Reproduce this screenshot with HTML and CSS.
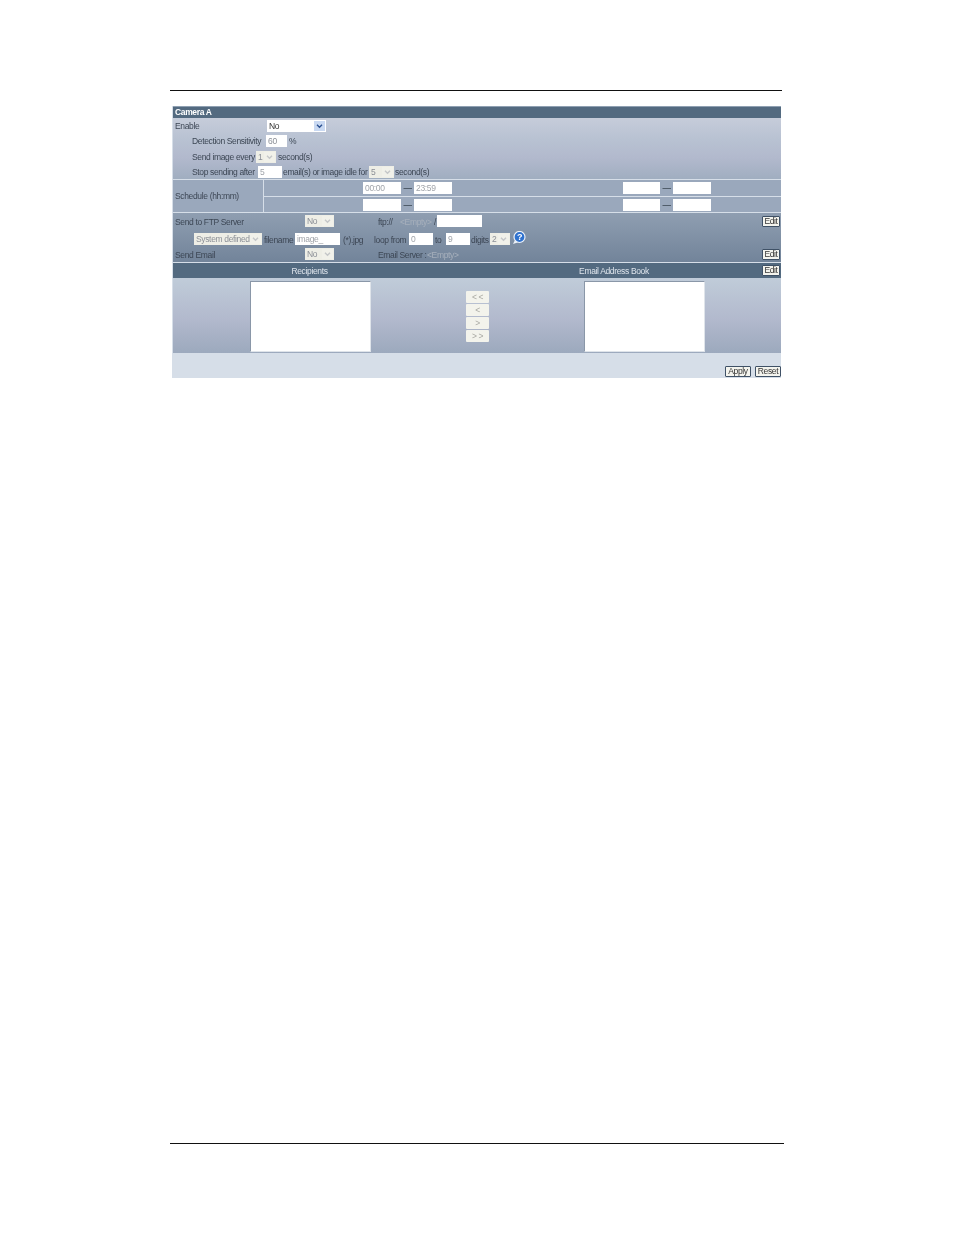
FILE: index.html
```html
<!DOCTYPE html>
<html lang="en">
<head>
  <meta charset="UTF-8">
  <title>Camera A</title>
  <link rel="stylesheet" href="styles.css">
</head>
<body>
  <div class="page">
    <hr class="rule top-rule">
    <form class="panel">
      <div class="title">Camera A</div>

      <div class="motion">
        <div class="row">
          <label class="col-enable">Enable</label>
          <span class="select on w59">No<i class="arrow"><svg viewBox="0 0 8 6"><path d="M1 1l3 3 3-3" /></svg></i></span>
        </div>
        <div class="row sub">
          <label class="col-sens">Detection Sensitivity</label>
          <span class="input w21">60</span><span class="unit">%</span>
        </div>
        <div class="row sub">
          <label class="col-every">Send image every</label>
          <span class="select w20">1<i class="arrow"><svg viewBox="0 0 8 6"><path d="M1 1l3 3 3-3" /></svg></i></span><span class="unit">second(s)</span>
        </div>
        <div class="row sub">
          <label class="col-stop">Stop sending after</label>
          <span class="input w24 dim">5</span><span class="unit idle">email(s) or image idle for</span>
          <span class="select w25">5<i class="arrow"><svg viewBox="0 0 8 6"><path d="M1 1l3 3 3-3" /></svg></i></span><span class="unit tight">second(s)</span>
        </div>
      </div>

      <div class="schedule">
        <div class="schedule-label">Schedule (hh:mm)</div>
        <div class="schedule-times">
          <div class="time-row">
            <span class="input w38 dim">00:00</span><span class="dash">—</span><span class="input w38 dim">23:59</span>
            <span class="input w37 second"></span><span class="dash">—</span><span class="input w38"></span>
          </div>
          <div class="time-row">
            <span class="input w38"></span><span class="dash">—</span><span class="input w38"></span>
            <span class="input w37 second"></span><span class="dash">—</span><span class="input w38"></span>
          </div>
        </div>
      </div>

      <div class="actions">
        <div class="row ftp-row">
          <label class="col-action">Send to FTP Server</label>
          <span class="select w29">No<i class="arrow"><svg viewBox="0 0 8 6"><path d="M1 1l3 3 3-3" /></svg></i></span>
          <span class="server ftp">ftp://</span><span class="empty">&lt;Empty&gt;</span><span class="slash">/</span>
          <span class="input w45"></span>
          <button type="button" class="btn edit">Edit</button>
        </div>
        <div class="row file-row">
          <span class="select w68">System defined<i class="arrow"><svg viewBox="0 0 8 6"><path d="M1 1l3 3 3-3" /></svg></i></span>
          <span class="gap2 t29">filename</span><span class="input w45 gap2 dim">image_</span>
          <span class="gap3 t23">(*).jpg</span><span class="gap8 t34">loop from</span>
          <span class="input w24 gap1 dim">0</span><span class="gap2 t9">to</span><span class="input w24 gap2 dim">9</span>
          <span class="gap1 t18">digits</span><span class="select w20 gap1">2<i class="arrow"><svg viewBox="0 0 8 6"><path d="M1 1l3 3 3-3" /></svg></i></span>
          <svg class="help" viewBox="0 0 14 14">
            <path class="help-tail" d="M3 9l-2 4 6-2z" />
            <circle class="help-ring" cx="7.5" cy="6" r="5.5" />
            <text class="help-mark" x="7.5" y="9">?</text>
          </svg>
        </div>
        <div class="row mail-row">
          <label class="col-action">Send Email</label>
          <span class="select w29">No<i class="arrow"><svg viewBox="0 0 8 6"><path d="M1 1l3 3 3-3" /></svg></i></span>
          <span class="server mail">Email Server :</span><span class="empty">&lt;Empty&gt;</span>
          <button type="button" class="btn edit">Edit</button>
        </div>
      </div>

      <div class="list-head">
        <span class="head-left">Recipients</span>
        <span class="head-right">Email Address Book</span>
        <button type="button" class="btn edit">Edit</button>
      </div>

      <div class="lists">
        <div class="listbox"></div>
        <div class="movers">
          <span class="mover">&lt; &lt;</span>
          <span class="mover">&lt;</span>
          <span class="mover">&gt;</span>
          <span class="mover">&gt; &gt;</span>
        </div>
        <div class="listbox"></div>
      </div>

      <div class="footer">
        <button type="button" class="btn">Apply</button>
        <button type="button" class="btn">Reset</button>
      </div>
    </form>
    <hr class="rule bottom-rule">
  </div>
</body>
</html>
```

FILE: styles.css
```css
* {
  box-sizing: border-box;
}
body {
  margin: 0;
  background: #fff;
  font-family: "Liberation Sans", Arial, sans-serif;
  font-size: 8.5px;
  letter-spacing: -0.35px;
  line-height: 12px;
  color: #3c4654;
}
.page {
  display: flex;
  flex-direction: column;
  height: 1235px;
  padding: 90px 0 0 170px;
}
.rule {
  margin: 0;
  border: 0;
  height: 1px;
  background: #111;
}
.top-rule {
  width: 612px;
}
.bottom-rule {
  width: 614px;
  margin-top: 765px;
}
.panel {
  display: flex;
  flex-direction: column;
  width: 609px;
  margin: 15px 0 0 2px;
  border-left: 1px solid #d6dee8;
  filter: blur(0.3px);
}
.title {
  height: 12px;
  line-height: 10px;
  padding-left: 2px;
  background: #536a80;
  border-top: 1px solid #8fa0b2;
  color: #fff;
  font-weight: bold;
}

/* rows */
.row {
  display: flex;
  align-items: flex-start;
  white-space: nowrap;
}
.motion {
  height: 62px;
  line-height: 13px;
  background: linear-gradient(#c6ccda, #b8c2d2 35%, #b2b9cd 65%, #a0aec0);
  border-bottom: 1px solid #d6dee8;
}
.motion .row {
  height: 15px;
  padding: 2px 0 0 2px;
}
.motion .sub {
  padding-left: 19px;
}
.motion .row:nth-child(2) {
  height: 16px;
}
.col-enable {
  flex: none;
  width: 92px;
}
.col-sens {
  flex: none;
  width: 74px;
}
.col-every {
  flex: none;
  width: 64px;
}
.col-stop {
  flex: none;
  width: 66px;
}
.unit {
  margin-left: 2px;
}
.idle {
  flex: none;
  width: 83px;
  margin-left: 1px;
  margin-right: 3px;
}
.tight {
  margin-left: 1px;
}

/* controls */
.input,
.select {
  display: flex;
  align-items: center;
  flex: none;
  height: 12px;
  padding-left: 2px;
  line-height: 12px;
  background: #fff;
  color: #8b8f96;
  overflow: hidden;
}
.input.dim {
  color: #a0a4aa;
}
.select {
  justify-content: space-between;
  background: #eeeee6;
  padding-right: 1px;
}
.select.on {
  background: #fff;
  color: #333;
}
.arrow {
  display: flex;
  align-items: center;
  justify-content: center;
  flex: none;
  width: 11px;
  height: 10px;
  background: #f1f1ea;
}
.arrow svg {
  width: 7px;
  height: 5px;
  fill: none;
  stroke: #c4c6c8;
  stroke-width: 1.6;
}
.on .arrow {
  background: #c9d9f2;
}
.on .arrow svg {
  stroke: #2a4f8f;
}
.w20 { width: 20px; }
.w21 { width: 21px; }
.w24 { width: 24px; }
.w25 { width: 25px; }
.w29 { width: 29px; }
.w37 { width: 37px; }
.w38 { width: 38px; }
.w45 { width: 45px; }
.w59 { width: 59px; }
.w68 { width: 68px; }

/* schedule */
.schedule {
  display: flex;
  height: 33px;
  background: #9aa8bc;
  border-bottom: 1px solid #d6dee8;
}
.schedule-label {
  display: flex;
  align-items: center;
  width: 91px;
  padding-left: 2px;
  border-right: 1px solid #d6dee8;
}
.schedule-times {
  flex: 1;
}
.time-row {
  display: flex;
  align-items: center;
  height: 16px;
  padding-left: 99px;
}
.time-row + .time-row {
  border-top: 1px solid #d6dee8;
}
.dash {
  width: 13px;
  text-align: center;
  color: #26303c;
}
.second {
  margin-left: 171px;
}

/* ftp and mail */
.actions {
  display: flex;
  flex-direction: column;
  height: 50px;
  line-height: 14px;
  background: linear-gradient(#8f9eb1, #72849a);
  border-bottom: 1px solid #d6dee8;
}
.ftp-row {
  height: 17px;
  padding: 2px 0 0 2px;
}
.file-row {
  height: 17px;
  padding: 3px 0 0 21px;
}
.mail-row {
  height: 15px;
  padding: 1px 0 0 2px;
}
.col-action {
  flex: none;
  width: 130px;
}
.server {
  flex: none;
  margin-left: 44px;
}
.ftp {
  width: 19px;
}
.mail {
  width: 46px;
}
.empty {
  flex: none;
  width: 30px;
  margin-left: 3px;
  color: #a7b0bc;
}
.slash {
  width: 3px;
  margin-left: 4px;
}
.gap1 { margin-left: 1px; }
.gap2 { margin-left: 2px; }
.gap3 { margin-left: 3px; }
.gap8 { margin-left: 8px; }
.t9 { width: 9px; }
.t18 { width: 18px; }
.t23 { width: 23px; }
.t29 { width: 29px; }
.t34 { width: 34px; }
.help {
  flex: none;
  width: 14px;
  height: 14px;
  margin: -2px 0 0 2px;
}
.help-ring {
  fill: #2f72cf;
  stroke: #eef3fa;
  stroke-width: 1.2;
}
.help-tail {
  fill: #eef3fa;
}
.help-mark {
  fill: #fff;
  font-size: 9px;
  font-weight: bold;
  text-anchor: middle;
}

/* buttons */
.btn {
  display: block;
  height: 11px;
  padding: 0;
  font: inherit;
  letter-spacing: inherit;
  line-height: 9px;
  text-align: center;
  color: #333;
  background: #f4f4ee;
  border: 1px solid #3f5166;
  border-radius: 1px;
}
.edit {
  width: 18px;
  margin: 1px 1px 0 auto;
}

/* lists */
.list-head {
  display: flex;
  align-items: center;
  height: 15px;
  background: #536a80;
  color: #dfe5ec;
}
.list-head .edit {
  margin-top: 0;
}
.head-left {
  width: 273px;
  text-align: center;
}
.head-right {
  width: 120px;
  margin-left: 108px;
  text-align: center;
}
.lists {
  display: flex;
  align-items: flex-start;
  height: 75px;
  padding: 3px 0 0 77px;
  background: linear-gradient(#c0ccd9, #b2b9cd 55%, #9ca9bd);
}
.listbox {
  flex: none;
  width: 121px;
  height: 71px;
  background: #fff;
  border: 1px solid #dfe4ea;
  border-top-color: #8a97a8;
  border-left-color: #8a97a8;
}
.movers {
  display: flex;
  flex-direction: column;
  gap: 1px;
  width: 213px;
  padding: 10px 0 0 95px;
}
.mover {
  width: 23px;
  height: 12px;
  line-height: 12px;
  text-align: center;
  color: #a8a8a2;
  background: #f3f3ec;
  border-radius: 1px;
}
.footer {
  display: flex;
  justify-content: flex-end;
  align-items: flex-end;
  gap: 4px;
  height: 25px;
  padding-bottom: 1px;
  background: #d6dee8;
}
.footer .btn {
  width: 26px;
}
```
